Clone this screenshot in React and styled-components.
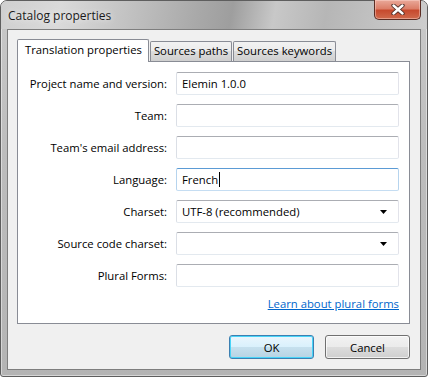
import styled, { createGlobalStyle } from "styled-components";

const GlobalStyle = createGlobalStyle`
  html, body {
    margin: 0;
    padding: 0;
    background: #ffffff;
  }
  * {
    box-sizing: border-box;
  }
`;

const fields = [
  { label: "Project name and version:", value: "Elemin 1.0.0" },
  { label: "Team:", value: "" },
  { label: "Team's email address:", value: "" },
  { label: "Language:", value: "French", focused: true },
  { label: "Charset:", value: "UTF-8 (recommended)", combo: true },
  { label: "Source code charset:", value: "", combo: true },
  { label: "Plural Forms:", value: "" },
];

const tabs = ["Translation properties", "Sources paths", "Sources keywords"];

const CloseIcon = () => (
  <svg width="14" height="11" viewBox="0 0 14 11">
    <path
      d="M2.5 1.5 L11.5 9.5 M11.5 1.5 L2.5 9.5"
      stroke="#4a2a24"
      strokeWidth="4.2"
      strokeLinecap="round"
    />
    <path
      d="M2.5 1.5 L11.5 9.5 M11.5 1.5 L2.5 9.5"
      stroke="#ffffff"
      strokeWidth="2.4"
      strokeLinecap="round"
    />
  </svg>
);

const ArrowDown = () => (
  <svg width="7" height="4" viewBox="0 0 7 4">
    <path d="M0 0 H7 L3.5 4 Z" fill="#000" />
  </svg>
);

const App = () => {
  return (
    <>
      <GlobalStyle />
      <Window>
        <TitleBar>
          <Title>Catalog properties</Title>
          <CloseButton>
            <CloseIcon />
          </CloseButton>
        </TitleBar>
        <Client>
          <TabStrip>
            {tabs.map((t, i) => (
              <Tab key={t} $active={i === 0}>
                {t}
              </Tab>
            ))}
          </TabStrip>
          <Panel>
            <Form>
              {fields.map((f) => (
                <Row key={f.label}>
                  <Label>{f.label}</Label>
                  <Field $focused={f.focused}>
                    <FieldText>
                      {f.value}
                      {f.focused && <Caret />}
                    </FieldText>
                    {f.combo && <ArrowDown />}
                  </Field>
                </Row>
              ))}
            </Form>
            <LinkRow>
              <Link href="#">Learn about plural forms</Link>
            </LinkRow>
          </Panel>
          <ButtonRow>
            <Button $default>OK</Button>
            <Button>Cancel</Button>
          </ButtonRow>
        </Client>
      </Window>
    </>
  );
};

const Window = styled.div`
  width: 428px;
  height: 377px;
  display: flex;
  flex-direction: column;
  padding: 0 6px 6px;
  border: 1px solid #5e5e5e;
  border-radius: 7px 7px 3px 3px;
  background: linear-gradient(180deg, #c9c9c9 0%, #bdbdbd 40%, #b4b4b4 100%);
  box-shadow: inset 0 0 0 1px rgba(255, 255, 255, 0.45);
  font-family: "Open Sans", "Noto Sans", sans-serif;
  font-size: 11.3px;
  color: #000;
`;

const TitleBar = styled.div`
  height: 28px;
  margin: 0 -6px;
  padding: 0 6px 0 7px;
  display: flex;
  align-items: flex-start;
  justify-content: space-between;
  border-radius: 6px 6px 0 0;
  background: linear-gradient(
    100deg,
    #cfcfcf 0%,
    #dadada 14%,
    #c2c2c2 30%,
    #a9a9a9 46%,
    #9e9e9e 54%,
    #c8c8c8 64%,
    #b6b6b6 76%,
    #c4c4c4 90%,
    #cdcdcd 100%
  );
`;

const Title = styled.div`
  padding-top: 6px;
  font-size: 12px;
  color: #1a1a1a;
  text-shadow: 0 0 6px rgba(255, 255, 255, 0.9);
`;

const CloseButton = styled.div`
  width: 47px;
  height: 20px;
  margin-top: -1px;
  display: flex;
  align-items: center;
  justify-content: center;
  border: 1px solid #5b2d24;
  border-top: none;
  border-radius: 0 0 5px 5px;
  background: linear-gradient(
    180deg,
    #e9a99a 0%,
    #dc7f69 45%,
    #c74a2e 55%,
    #d06a4c 100%
  );
  box-shadow: inset 0 0 0 1px rgba(255, 220, 210, 0.45);
`;

const Client = styled.div`
  flex: 1;
  display: flex;
  flex-direction: column;
  padding: 9px 10px 10px 9px;
  border: 1px solid #7e7e7e;
  background: #f0f0f0;
`;

const TabStrip = styled.div`
  height: 22px;
  display: flex;
  align-items: flex-end;
  position: relative;
  z-index: 1;
`;

const Tab = styled.div`
  height: ${(p) => (p.$active ? "23px" : "20px")};
  margin-bottom: ${(p) => (p.$active ? "-1px" : "0")};
  margin-left: ${(p) => (p.$active ? "0" : "1px")};
  padding: ${(p) => (p.$active ? "2px 6px 0 7px" : "1px 3px 0 3px")};
  display: flex;
  align-items: flex-start;
  border: 1px solid #898c95;
  border-bottom: none;
  border-radius: 2px 2px 0 0;
  background: ${(p) =>
    p.$active
      ? "#ffffff"
      : "linear-gradient(180deg, #f2f2f2 0%, #ebebeb 50%, #dddddd 50%, #cfcfcf 100%)"};
  white-space: nowrap;
`;

const Panel = styled.div`
  height: 263px;
  display: flex;
  flex-direction: column;
  padding: 10px 10px 0 0;
  border: 1px solid #898c95;
  background: #ffffff;
`;

const Form = styled.div`
  display: flex;
  flex-direction: column;
  gap: 9px;
`;

const Row = styled.div`
  display: grid;
  grid-template-columns: 149px 1fr;
  column-gap: 9px;
  align-items: center;
`;

const Label = styled.div`
  text-align: right;
  white-space: nowrap;
`;

const Field = styled.div`
  height: 23px;
  display: flex;
  align-items: center;
  justify-content: space-between;
  padding: 0 11px 0 5px;
  border: 1px solid;
  border-radius: 2px;
  border-color: ${(p) =>
    p.$focused
      ? "#5b9bd5 #b6d4ee #c5ddf2 #b6d4ee"
      : "#abadb3 #e2e3ea #e3e9ef #dbdfe6"};
  background: #ffffff;
`;

const FieldText = styled.div`
  display: flex;
  align-items: center;
  white-space: nowrap;
`;

const Caret = styled.span`
  width: 1px;
  height: 15px;
  margin-left: 1px;
  background: #000;
`;

const LinkRow = styled.div`
  margin-top: 9px;
  display: flex;
  justify-content: flex-end;
`;

const Link = styled.a`
  color: #0066cc;
  text-decoration: underline;
`;

const ButtonRow = styled.div`
  margin-top: 11px;
  display: flex;
  justify-content: flex-end;
  gap: 11px;
`;

const Button = styled.div`
  width: 85px;
  height: 24px;
  display: flex;
  align-items: center;
  justify-content: center;
  border: 1px solid ${(p) => (p.$default ? "#3c7fb1" : "#707070")};
  border-radius: 3px;
  background: ${(p) =>
    p.$default
      ? "linear-gradient(180deg, #eaf6fd 0%, #d9f0fc 50%, #c6e0ee 50%, #b7d3e3 100%)"
      : "linear-gradient(180deg, #f2f2f2 0%, #ebebeb 50%, #dddddd 50%, #cfcfcf 100%)"};
  box-shadow: ${(p) =>
    p.$default
      ? "inset 0 0 0 1px #48d4f8"
      : "inset 0 0 0 1px rgba(255, 255, 255, 0.7)"};
`;

export default App;
